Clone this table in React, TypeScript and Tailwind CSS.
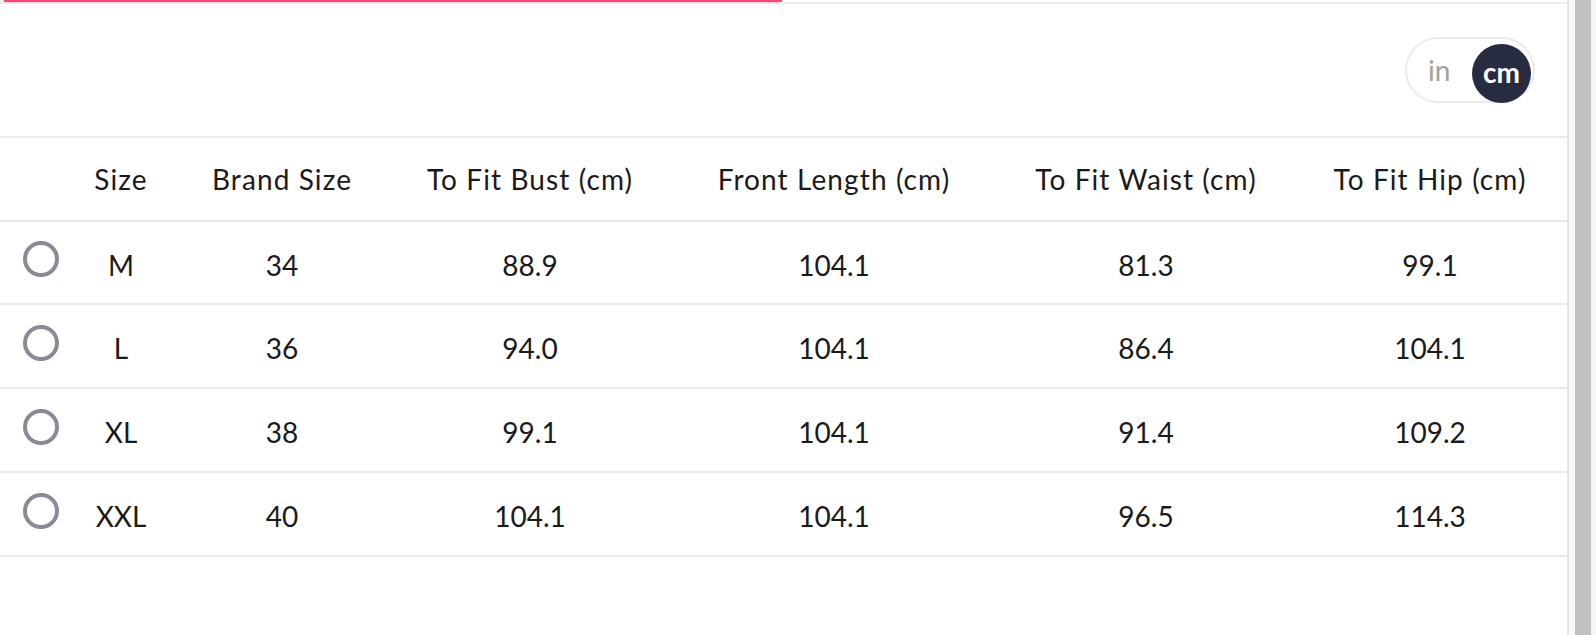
import React from "react";

const rows = [
  ["M", "34", "88.9", "104.1", "81.3", "99.1"],
  ["L", "36", "94.0", "104.1", "86.4", "104.1"],
  ["XL", "38", "99.1", "104.1", "91.4", "109.2"],
  ["XXL", "40", "104.1", "104.1", "96.5", "114.3"],
];

const headers = ["Size", "Brand Size", "To Fit Bust (cm)", "Front Length (cm)", "To Fit Waist (cm)", "To Fit Hip (cm)"];

const gridCols = "grid grid-cols-[82px_78px_244px_252px_356px_268px_287px]";

export default function App() {
  return (
    <div
      className="flex w-[1596px] h-[635px] bg-white overflow-hidden text-[#1a1a1a]"
      style={{ fontFamily: "Lato, 'Open Sans', sans-serif" }}
    >
      <div className="w-[1567px] flex flex-col">
        <div className="flex flex-col">
          <div className="flex">
            <div className="w-[4px] h-[2px] bg-[#ececec]" />
            <div className="w-[778px] h-[2px] bg-[#ff4672]" />
          </div>
          <div className="h-[2px] bg-[#ececec]" />
        </div>
        <div className="h-[132px] flex items-center justify-end pr-[32px]">
          <div className="w-[130px] h-[66px] rounded-full border-2 border-[#ebebeb] flex items-center justify-between pl-[21px] pr-[2px]">
            <span className="text-[28px] text-[#a0a0a0] leading-none">in</span>
            <div className="w-[59px] h-[59px] mt-[6px] rounded-full bg-[#282c40] flex items-center justify-center">
              <span className="text-[28px] font-bold text-white leading-none pb-[2px]">cm</span>
            </div>
          </div>
        </div>
        <div className="flex flex-col text-[28px]">
          <div className={`${gridCols} h-[84px] border-t-2 border-[#e9e9e9]`}>
            <div />
            {headers.map((h, i) => (
              <div
                key={h}
                className={`flex items-center justify-center whitespace-nowrap tracking-[1.1px] ${i === 5 ? "pl-[13px]" : ""}`}
              >
                {h}
              </div>
            ))}
          </div>
          {rows.map((r, ri) => (
            <div
              key={r[0]}
              className={`${gridCols} ${ri === 0 ? "h-[83px]" : "h-[84px]"} border-t-2 border-[#e9e9e9]`}
            >
              <div className="flex items-center justify-center">
                <div className="w-[36px] h-[36px] mb-[7px] rounded-full border-4 border-[#8a8a96]" />
              </div>
              {r.map((c, i) => (
                <div
                  key={i}
                  className={`flex items-center justify-center pt-[4px] whitespace-nowrap ${i === 5 ? "pl-[13px]" : ""}`}
                >
                  {c}
                </div>
              ))}
            </div>
          ))}
          <div className="border-t-2 border-[#e9e9e9]" />
        </div>
      </div>
      <div className="w-[2px] bg-[#e6e6e6]" />
      <div className="flex-1 flex bg-[#f8f8f8] pl-[6px] pr-[5px]">
        <div className="flex-1 bg-[#c1c1c1]" />
      </div>
    </div>
  );
}
